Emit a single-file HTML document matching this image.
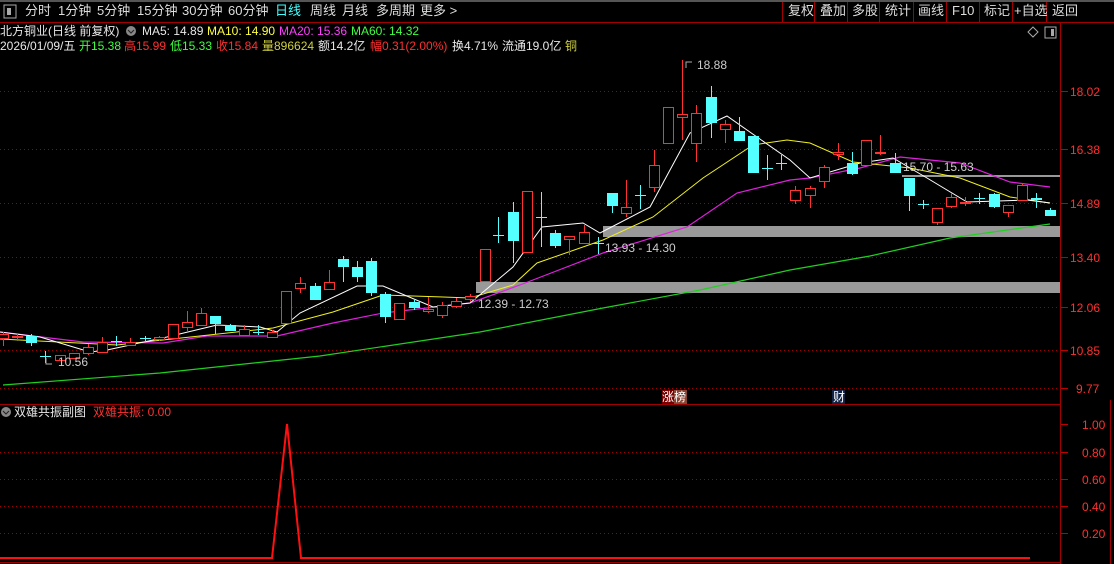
<!DOCTYPE html>
<html><head><meta charset="utf-8"><style>
*{margin:0;padding:0;box-sizing:border-box}
body{width:1114px;height:564px;background:#000;overflow:hidden;position:relative;font-family:"Liberation Sans","Noto Sans CJK SC",sans-serif;font-size:12px;color:#ddd}
.a{position:absolute;white-space:nowrap;line-height:14px}
.tb{font-size:13px;top:4px;color:#ddd}
.w{color:#e8e8e8}.y{color:#ffff40}.m{color:#ff40ff}.g{color:#40ff40}.r{color:#ff3030}.c{color:#40ffff}.o{color:#d0d040}
.ax{color:#ff3030;font-size:12px}
</style></head><body>
<svg id="s" width="1114" height="564" style="position:absolute;left:0;top:0">
<line x1="0" y1="1" x2="1114" y2="1" stroke="#555" stroke-width="2"/>
<line x1="0" y1="22.5" x2="1114" y2="22.5" stroke="#a00000"/>
<line x1="0" y1="404.5" x2="1060" y2="404.5" stroke="#a00000"/>
<line x1="1060.5" y1="23" x2="1060.5" y2="564" stroke="#a00000"/>
<line x1="1110.5" y1="400" x2="1110.5" y2="564" stroke="#a00000"/>
<line x1="0" y1="562.5" x2="1060" y2="562.5" stroke="#a00000"/>
<g stroke="#a00000" stroke-dasharray="1 3">
<line x1="0" y1="91.5" x2="1060" y2="91.5"/><line x1="0" y1="149.5" x2="1060" y2="149.5"/>
<line x1="0" y1="203.5" x2="1060" y2="203.5"/><line x1="0" y1="257.5" x2="1060" y2="257.5"/>
<line x1="0" y1="307.5" x2="1060" y2="307.5"/><line x1="0" y1="350.5" x2="1060" y2="350.5"/>
<line x1="0" y1="388.5" x2="1060" y2="388.5"/>
<line x1="0" y1="452.5" x2="1060" y2="452.5"/><line x1="0" y1="479.5" x2="1060" y2="479.5"/>
<line x1="0" y1="506.5" x2="1060" y2="506.5"/><line x1="0" y1="533.5" x2="1060" y2="533.5"/>
</g>
<g stroke="#c00000">
<line x1="1061" y1="91.5" x2="1068" y2="91.5"/><line x1="1061" y1="149.5" x2="1068" y2="149.5"/>
<line x1="1061" y1="203.5" x2="1068" y2="203.5"/><line x1="1061" y1="257.5" x2="1068" y2="257.5"/>
<line x1="1061" y1="307.5" x2="1068" y2="307.5"/><line x1="1061" y1="350.5" x2="1068" y2="350.5"/>
<line x1="1061" y1="388.5" x2="1068" y2="388.5"/>
<line x1="1061" y1="424.5" x2="1068" y2="424.5"/><line x1="1061" y1="452.5" x2="1068" y2="452.5"/>
<line x1="1061" y1="479.5" x2="1068" y2="479.5"/><line x1="1061" y1="506.5" x2="1068" y2="506.5"/>
<line x1="1061" y1="533.5" x2="1068" y2="533.5"/>
</g>
<g stroke="#a00000" stroke-width="1">
<line x1="782.5" y1="2" x2="782.5" y2="22"/><line x1="814.5" y1="2" x2="814.5" y2="22"/><line x1="847.5" y1="2" x2="847.5" y2="22"/><line x1="879.5" y1="2" x2="879.5" y2="22"/><line x1="913.5" y1="2" x2="913.5" y2="22"/><line x1="946.5" y1="2" x2="946.5" y2="22"/><line x1="979.5" y1="2" x2="979.5" y2="22"/><line x1="1012.5" y1="2" x2="1012.5" y2="22"/><line x1="1046.5" y1="2" x2="1046.5" y2="22"/>
</g>
<rect x="4" y="5" width="12" height="13" fill="none" stroke="#aaa"/><rect x="7" y="8" width="4" height="7" fill="#aaa"/>
<rect x="476" y="282" width="584" height="11" fill="#999"/>
<rect x="603" y="226" width="457" height="11" fill="#999"/>
<rect x="902" y="175" width="158" height="2" fill="#999"/>
<polyline fill="none" stroke="#20d020" stroke-width="1.2" points="3,385 160,373 320,356 480,332 603,308 700,290 790,270 870,256 950,238 1050,224"/>
<polyline fill="none" stroke="#e020e0" stroke-width="1.2" points="0,332 83,342 163,343 207,336 277,336 333,323 383,313 470,303 520,285 603,253 687,227 737,193 790,180 810,178 860,168 900,157 960,163 1010,182 1050,187"/>
<polyline fill="none" stroke="#f0f020" stroke-width="1" points="0,339 117,345 273,328 333,312 383,295 443,297 470,298 513,285 537,263 603,240 653,217 703,178 753,145 787,140 810,143 853,162 910,168 960,178 1010,197 1050,203"/>
<polyline fill="none" stroke="#fff" stroke-width="1" points="0,332 40,337 90,352 107,350 167,337 217,325 260,327 277,332 300,313 357,286 383,286 433,307 470,303 513,267 542,227 583,223 600,233 650,207 690,133 727,116 757,137 790,160 810,178 860,163 893,158 927,178 967,202 1027,200 1050,203"/>
<g id="cd"></g>
<polyline fill="none" stroke="#ff1010" stroke-width="2" points="0,558 272,558 287,424 301,558 1030,558"/>
<polyline fill="none" stroke="#aaa" points="686,68 686,62 692,62"/>
<polyline fill="none" stroke="#aaa" points="46,358 46,364 52,364"/>
<rect x="1045" y="27" width="11" height="11" fill="none" stroke="#aaa"/><rect x="1051" y="29" width="3" height="7" fill="#aaa"/>
<path d="M1033 27 L1038 32 L1033 37 L1028 32Z" fill="none" stroke="#aaa"/>
<circle cx="131" cy="31" r="5" fill="#888"/><path d="M128 30 l3 3 l3 -3" stroke="#222" fill="none"/>
<circle cx="6" cy="412" r="5" fill="#888"/><path d="M3 411 l3 3 l3 -3" stroke="#222" fill="none"/>
<rect x="662" y="390" width="12" height="14" fill="#700"/><rect x="674" y="390" width="13" height="14" fill="#843"/>
<rect x="832" y="390" width="13" height="14" fill="#124"/>
</svg>
<script>
var d=[[3,334,338,332,346,0],[17,336,337,334,341,0],[31,336,343,334,346,1],[45,356,357,351,363,1],[60,355,360,355,360,0],[74,353,358,353,358,0],[88,347,353,344,355,0],[102,342,352,337,352,0],[116,341,342,336,346,1],[130,342,345,338,346,0],[145,338,339,336,342,1],[159,337,339,336,341,0],[173,324,338,324,338,0],[187,322,327,311,332,0],[201,313,325,308,325,0],[215,316,324,316,334,1],[230,325,331,324,331,1],[244,329,335,325,335,0],[258,332,333,325,335,1],[272,332,337,330,337,0],[286,291,323,291,323,0],[300,283,288,277,293,0],[315,286,300,283,300,1],[329,282,289,270,289,0],[343,259,267,256,282,1],[357,267,277,261,282,1],[371,261,293,258,296,1],[385,294,317,292,323,1],[399,303,319,303,319,0],[414,302,308,300,310,1],[428,309,311,297,313,0],[442,305,315,302,318,0],[456,301,306,298,308,0],[470,296,299,294,302,0],[485,249,281,249,281,0],[498,235,236,217,243,1],[513,212,241,202,263,1],[527,191,252,191,252,0],[541,217,218,192,247,1],[555,233,246,230,248,1],[569,236,239,236,255,0],[584,232,243,225,243,0],[598,243,244,237,254,1],[612,193,206,193,213,1],[626,207,213,180,217,0],[640,195,196,185,209,1],[654,165,187,150,192,0],[668,107,143,107,144,0],[682,114,117,60,140,0],[696,113,143,105,162,0],[711,97,123,86,138,1],[725,124,129,120,143,0],[739,131,141,117,141,1],[753,136,173,136,173,1],[767,168,169,155,180,1],[781,163,164,155,170,1],[795,190,200,186,204,0],[810,188,195,186,208,0],[824,167,181,165,188,0],[838,152,154,143,160,0],[852,163,174,152,175,1],[866,140,165,140,165,0],[880,152,153,135,155,0],[895,163,173,153,173,1],[909,178,196,178,211,1],[923,204,205,200,209,1],[937,208,222,208,225,0],[951,197,206,193,208,0],[965,202,203,197,206,0],[979,198,199,193,204,1],[994,194,207,193,208,1],[1008,205,212,205,217,0],[1022,185,200,184,200,0],[1036,198,200,193,208,1],[1050,210,216,208,216,1]];
var h='';d.forEach(function(k){var x=k[0],col=k[5]?'#54ffff':'#ff3232';
h+='<line x1="'+(x+.5)+'" y1="'+k[3]+'" x2="'+(x+.5)+'" y2="'+k[4]+'" stroke="'+col+'"/>';
var bh=Math.max(k[2]-k[1],1);
if(k[5])h+='<rect x="'+(x-5)+'" y="'+k[1]+'" width="11" height="'+bh+'" fill="'+col+'"/>';
else h+='<rect x="'+(x-4.5)+'" y="'+(k[1]+.5)+'" width="10" height="'+bh+'" fill="#000" stroke="'+col+'"/>';});
document.getElementById('cd').innerHTML=h;
</script>
<div class="a tb" style="left:25px">分时</div>
<div class="a tb" style="left:58px">1分钟</div>
<div class="a tb" style="left:97px">5分钟</div>
<div class="a tb" style="left:137px">15分钟</div>
<div class="a tb" style="left:182px">30分钟</div>
<div class="a tb" style="left:228px">60分钟</div>
<div class="a tb c" style="left:275px">日线</div>
<div class="a tb" style="left:310px">周线</div>
<div class="a tb" style="left:342px">月线</div>
<div class="a tb" style="left:376px">多周期</div>
<div class="a tb" style="left:420px">更多 &gt;</div>
<div class="a tb" style="left:788px">复权</div>
<div class="a tb" style="left:820px">叠加</div>
<div class="a tb" style="left:852px">多股</div>
<div class="a tb" style="left:885px">统计</div>
<div class="a tb" style="left:918px">画线</div>
<div class="a tb" style="left:952px">F10</div>
<div class="a tb" style="left:984px">标记</div>
<div class="a tb" style="left:1014px">+自选</div>
<div class="a tb" style="left:1052px">返回</div>
<div class="a w" style="left:0;top:24px">北方铜业(日线 前复权)</div>
<div class="a w" style="left:142px;top:24px">MA5: 14.89</div>
<div class="a y" style="left:207px;top:24px">MA10: 14.90</div>
<div class="a m" style="left:279px;top:24px">MA20: 15.36</div>
<div class="a g" style="left:351px;top:24px">MA60: 14.32</div>
<div class="a w" style="left:0;top:39px">2026/01/09/五</div>
<div class="a g" style="left:79px;top:39px">开15.38</div>
<div class="a r" style="left:124px;top:39px">高15.99</div>
<div class="a g" style="left:170px;top:39px">低15.33</div>
<div class="a r" style="left:216px;top:39px">收15.84</div>
<div class="a o" style="left:262px;top:39px">量896624</div>
<div class="a w" style="left:318px;top:39px">额14.2亿</div>
<div class="a r" style="left:370px;top:39px">幅0.31(2.00%)</div>
<div class="a w" style="left:452px;top:39px">换4.71%</div>
<div class="a w" style="left:502px;top:39px">流通19.0亿</div>
<div class="a o" style="left:565px;top:39px">铜</div>
<div class="a ax" style="left:1070px;top:85px">18.02</div>
<div class="a ax" style="left:1070px;top:143px">16.38</div>
<div class="a ax" style="left:1070px;top:197px">14.89</div>
<div class="a ax" style="left:1070px;top:251px">13.40</div>
<div class="a ax" style="left:1070px;top:301px">12.06</div>
<div class="a ax" style="left:1070px;top:344px">10.85</div>
<div class="a ax" style="left:1076px;top:382px">9.77</div>
<div class="a ax" style="left:1082px;top:418px">1.00</div>
<div class="a ax" style="left:1082px;top:446px">0.80</div>
<div class="a ax" style="left:1082px;top:473px">0.60</div>
<div class="a ax" style="left:1082px;top:500px">0.40</div>
<div class="a ax" style="left:1082px;top:527px">0.20</div>
<div class="a" style="left:697px;top:58px;color:#ccc">18.88</div>
<div class="a" style="left:58px;top:355px;color:#ccc">10.56</div>
<div class="a" style="left:478px;top:297px;color:#ccc">12.39 - 12.73</div>
<div class="a" style="left:605px;top:241px;color:#ccc">13.93 - 14.30</div>
<div class="a" style="left:903px;top:160px;color:#ccc">15.70 - 15.63</div>
<div class="a" style="left:662px;top:390px;color:#fff">涨榜</div>
<div class="a" style="left:833px;top:390px;color:#fff">财</div>
<div class="a w" style="left:14px;top:405px">双雄共振副图</div>
<div class="a r" style="left:93px;top:405px">双雄共振: 0.00</div>
</body></html>
